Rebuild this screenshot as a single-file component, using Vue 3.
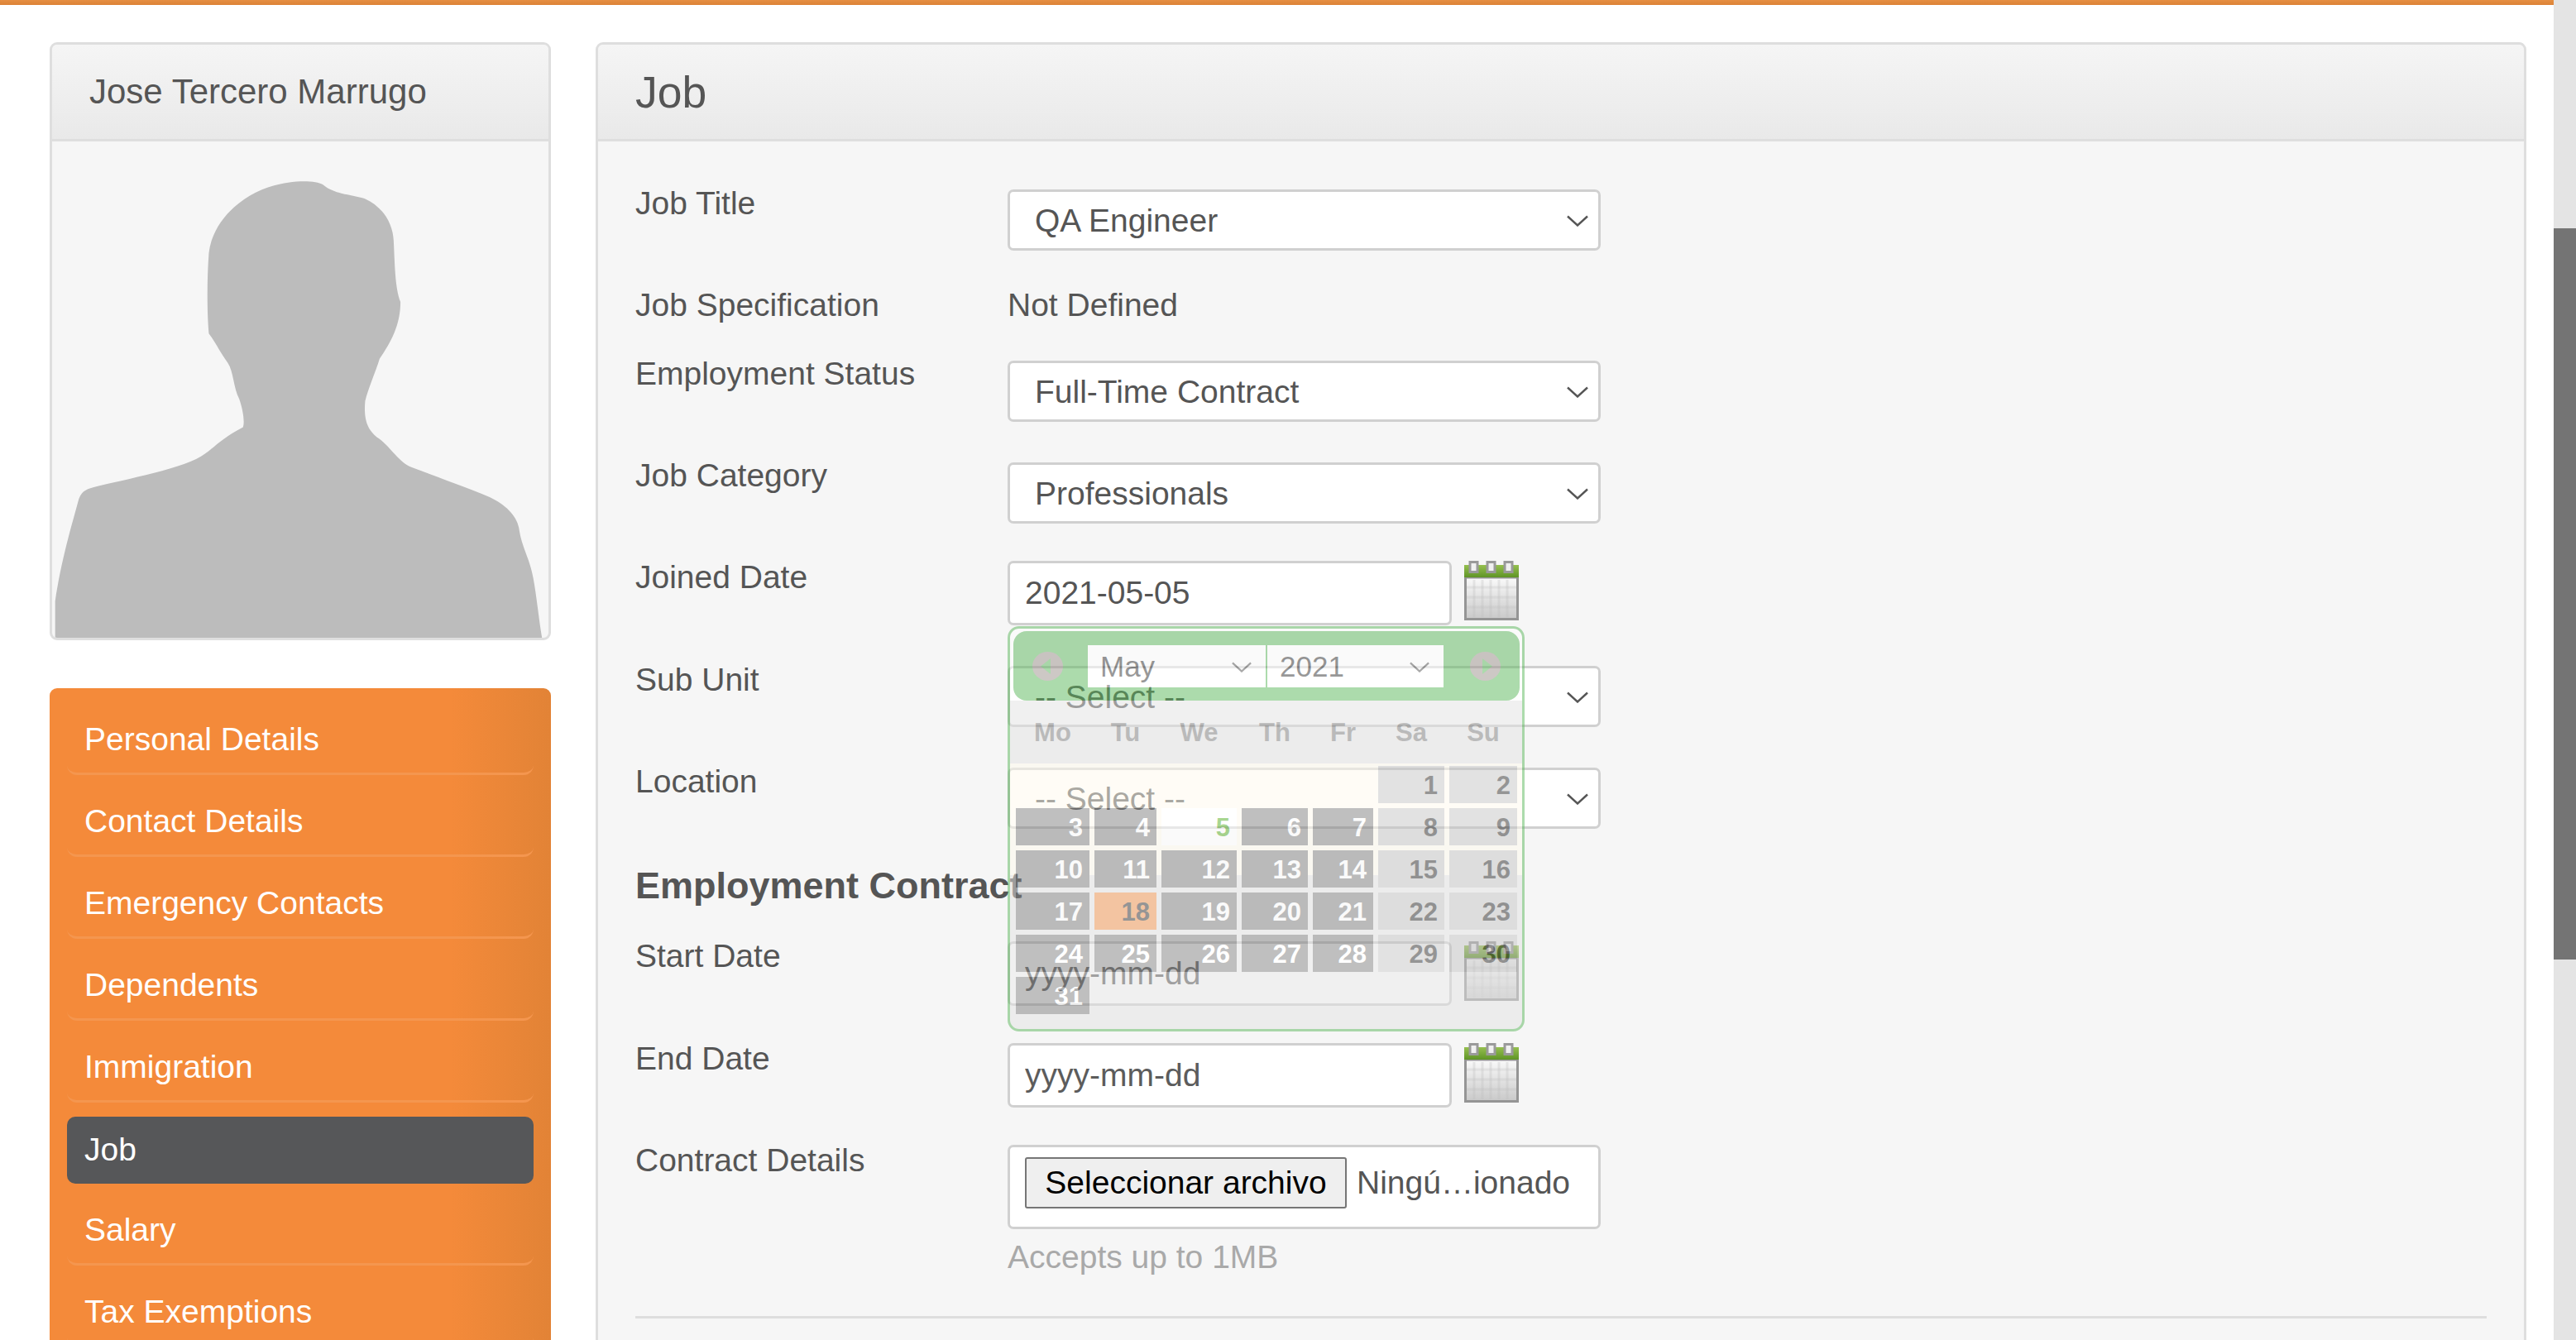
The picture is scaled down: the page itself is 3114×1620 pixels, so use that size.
<script setup>
const menu = ['Personal Details','Contact Details','Emergency Contacts','Dependents','Immigration','Job','Salary','Tax Exemptions']
const weekdays = ['Mo','Tu','We','Th','Fr','Sa','Su']
const days = []
const lead = 5
for (let i = 0; i < lead; i++) days.push({ n: '', kind: 'blank' })
for (let d = 1; d <= 31; d++) {
  const col = (d + lead - 1) % 7
  let kind = col >= 5 ? 'weekend' : 'weekday'
  if (d === 5) kind = 'selected'
  if (d === 18) kind = 'today'
  days.push({ n: d, kind })
}
const vlines = [12, 22, 32, 42, 52]
const hlines = [32, 44, 56]
</script>

<template>
  <div class="screen">
    <div class="page">
      <div class="topbar"></div>
      <div class="columns">
        <aside class="side">
          <section class="card">
            <header class="card-head name">Jose Tercero Marrugo</header>
            <div class="photo">
              <svg class="silhouette" viewBox="137 335 1308 1176" preserveAspectRatio="none">
                <path fill="#bcbcbc" d="M145 1511 L145 1425 C160 1330 190 1240 205 1190 C212 1165 225 1160 245 1155 C330 1135 490 1110 540 1075 C570 1055 590 1035 640 1012 C645 1000 640 970 630 945 C615 920 615 880 600 860 C580 835 570 815 550 790 C545 740 545 660 550 600 C560 520 640 460 720 440 C760 428 830 425 850 437 C880 460 920 460 960 470 C1010 490 1035 530 1037 570 C1040 620 1040 680 1055 715 C1055 770 1030 810 1000 850 C990 880 970 920 962 950 C958 990 965 1020 1000 1040 C1030 1060 1050 1095 1085 1107 C1150 1130 1230 1155 1290 1178 C1330 1195 1360 1220 1367 1250 C1375 1300 1395 1320 1405 1370 C1415 1420 1420 1470 1428 1511 Z"/>
              </svg>
            </div>
          </section>
          <nav class="menu">
            <a v-for="m in menu" :key="m" class="item" :class="{ active: m === 'Job' }">{{ m }}</a>
          </nav>
        </aside>

        <main class="card main-card">
          <header class="card-head title">Job</header>
          <div class="form-wrap">
            <form class="form">
              <label class="lbl">Job Title</label>
              <div class="ctl"><span class="sel"><select><option>QA Engineer</option></select><svg class="chev" viewBox="0 0 26 14"><path d="M1 1.5 L13 12.5 L25 1.5" /></svg></span></div>

              <label class="lbl lbl-plain">Job Specification</label>
              <div class="ctl plain">Not Defined</div>

              <label class="lbl lbl-tight">Employment Status</label>
              <div class="ctl"><span class="sel"><select><option>Full-Time Contract</option></select><svg class="chev" viewBox="0 0 26 14"><path d="M1 1.5 L13 12.5 L25 1.5" /></svg></span></div>

              <label class="lbl lbl-tight">Job Category</label>
              <div class="ctl"><span class="sel"><select><option>Professionals</option></select><svg class="chev" viewBox="0 0 26 14"><path d="M1 1.5 L13 12.5 L25 1.5" /></svg></span></div>

              <label class="lbl lbl-joined">Joined Date</label>
              <div class="ctl date">
                <input class="inp" value="2021-05-05" readonly />
                <svg class="cal-ico" viewBox="0 0 66 72">
                  <defs>
                    <linearGradient id="calbody" x1="0" y1="0" x2="0" y2="1"><stop offset="0" stop-color="#fafafa"/><stop offset="1" stop-color="#c9c9c9"/></linearGradient>
                    <linearGradient id="calgreen" x1="0" y1="0" x2="0" y2="1"><stop offset="0" stop-color="#96c050"/><stop offset="1" stop-color="#5f9426"/></linearGradient>
                  </defs>
                  <rect x="1.5" y="20" width="63" height="50.5" fill="url(#calbody)" stroke="#959595" stroke-width="3"/>
                  <path v-for="l in vlines" :key="l" :d="`M${l} 23 V68`" stroke="#bdbdbd" stroke-opacity=".3" stroke-width="3"/>
                  <path v-for="l in hlines" :key="l" :d="`M3 ${l} H63`" stroke="#bdbdbd" stroke-opacity=".25" stroke-width="3"/>
                  <rect x="0" y="5" width="66" height="15" fill="url(#calgreen)"/>
                  <rect v-for="c in [7, 28, 49]" :key="c" :x="c" y="1.5" width="9" height="12" fill="#f0f0f0" stroke="#9a9a9a" stroke-width="3"/>
                </svg>

                <div class="calendar">
                  <div class="cal-band"></div>
                  <div class="cal-head">
                    <span class="nav-btn"><svg viewBox="0 0 37 35"><path d="M22 8 L10 17.5 L22 27 Z" fill="#5cb85c"/></svg></span>
                    <span class="cal-sel month"><select><option>May</option></select><svg class="chev small" viewBox="0 0 26 14"><path d="M1 1.5 L13 12.5 L25 1.5" /></svg></span>
                    <span class="cal-sel year"><select><option>2021</option></select><svg class="chev small" viewBox="0 0 26 14"><path d="M1 1.5 L13 12.5 L25 1.5" /></svg></span>
                    <span class="nav-btn next"><svg viewBox="0 0 37 35"><path d="M15 8 L27 17.5 L15 27 Z" fill="#5cb85c"/></svg></span>
                  </div>
                  <div class="grid weekdays">
                    <span v-for="w in weekdays" :key="w">{{ w }}</span>
                  </div>
                  <div class="grid days">
                    <span v-for="(d, i) in days" :key="i" class="day" :class="d.kind">{{ d.n }}</span>
                  </div>
                </div>
              </div>

              <label class="lbl">Sub Unit</label>
              <div class="ctl"><span class="sel"><select><option>-- Select --</option></select><svg class="chev" viewBox="0 0 26 14"><path d="M1 1.5 L13 12.5 L25 1.5" /></svg></span></div>

              <label class="lbl">Location</label>
              <div class="ctl"><span class="sel"><select><option>-- Select --</option></select><svg class="chev" viewBox="0 0 26 14"><path d="M1 1.5 L13 12.5 L25 1.5" /></svg></span></div>

              <h2 class="section">Employment Contract</h2>

              <label class="lbl lbl-start">Start Date</label>
              <div class="ctl date">
                <input class="inp" placeholder="yyyy-mm-dd" />
                <svg class="cal-ico" viewBox="0 0 66 72">
                  <rect x="1.5" y="20" width="63" height="50.5" fill="url(#calbody)" stroke="#959595" stroke-width="3"/>
                  <path v-for="l in vlines" :key="l" :d="`M${l} 23 V68`" stroke="#bdbdbd" stroke-opacity=".3" stroke-width="3"/>
                  <path v-for="l in hlines" :key="l" :d="`M3 ${l} H63`" stroke="#bdbdbd" stroke-opacity=".25" stroke-width="3"/>
                  <rect x="0" y="5" width="66" height="15" fill="url(#calgreen)"/>
                  <rect v-for="c in [7, 28, 49]" :key="c" :x="c" y="1.5" width="9" height="12" fill="#f0f0f0" stroke="#9a9a9a" stroke-width="3"/>
                </svg>
              </div>

              <label class="lbl lbl-end">End Date</label>
              <div class="ctl date">
                <input class="inp" placeholder="yyyy-mm-dd" />
                <svg class="cal-ico" viewBox="0 0 66 72">
                  <rect x="1.5" y="20" width="63" height="50.5" fill="url(#calbody)" stroke="#959595" stroke-width="3"/>
                  <path v-for="l in vlines" :key="l" :d="`M${l} 23 V68`" stroke="#bdbdbd" stroke-opacity=".3" stroke-width="3"/>
                  <path v-for="l in hlines" :key="l" :d="`M3 ${l} H63`" stroke="#bdbdbd" stroke-opacity=".25" stroke-width="3"/>
                  <rect x="0" y="5" width="66" height="15" fill="url(#calgreen)"/>
                  <rect v-for="c in [7, 28, 49]" :key="c" :x="c" y="1.5" width="9" height="12" fill="#f0f0f0" stroke="#9a9a9a" stroke-width="3"/>
                </svg>
              </div>

              <label class="lbl lbl-details">Contract Details</label>
              <div class="ctl">
                <div class="file">
                  <button type="button" class="file-btn">Seleccionar archivo</button>
                  <span class="file-name">Ningú…ionado</span>
                </div>
                <div class="hint">Accepts up to 1MB</div>
              </div>
            </form>
            <hr class="divider" />
          </div>
        </main>
      </div>
    </div>
    <div class="scrollbar"><div class="thumb"></div></div>
  </div>
</template>

<style>
html, body { margin: 0; overflow: hidden; background: #fff; }
</style>

<style scoped>
.screen {
  display: flex;
  width: 3114px;
  height: 1620px;
  overflow: hidden;
  font-family: "Liberation Sans", Arial, sans-serif;
  color: #555;
}
.page { flex: 1; min-width: 0; background: #fff; }
.topbar { height: 6px; background: linear-gradient(#e58f43, #dc8236); }
.columns { display: flex; align-items: flex-start; padding: 45px 33px 0 60px; gap: 54px; }
.scrollbar { width: 27px; background: #e4e4e4; }
.thumb { margin-top: 276px; height: 884px; background: #747474; }

.side { width: 606px; flex: none; }
.card {
  border: 3px solid #dedede;
  border-radius: 9px;
  background: #f6f6f6;
  overflow: hidden;
}
.card-head {
  height: 114px;
  border-bottom: 3px solid #dedede;
  background: linear-gradient(#f5f5f5, #e9e9e9);
  box-sizing: content-box;
  display: flex;
  align-items: center;
}
.name { font-size: 42px; padding-left: 45px; }
.title { font-size: 53.5px; padding-left: 45px; }
.photo { height: 600px; display: flex; }
.silhouette { width: 600px; height: 600px; display: block; }

.menu {
  margin-top: 58px;
  padding: 23px 21px 0;
  height: 800px;
  border-radius: 9px 9px 0 0;
  background: linear-gradient(90deg, #f48a3a 0 80%, #e28336 100%);
  display: flex;
  flex-direction: column;
  gap: 17px;
}
.item {
  display: flex;
  align-items: center;
  flex: none;
  box-sizing: border-box;
  height: 82px;
  padding: 0 21px 2px;
  font-size: 39px;
  color: #fff;
  border-bottom: 3px solid #f4964f;
  border-radius: 0 0 12px 12px;
}
.item.active {
  height: 81px;
  background: #565759;
  border-bottom: 0;
  border-radius: 10px;
}

.main-card { flex: 1; min-width: 0; height: 1700px; }
.form-wrap { padding: 58px 45px 0; }
.form {
  display: grid;
  grid-template-columns: 450px 1fr;
  grid-template-rows: 116px 91px 123px 119px 127px 123px 114px 96px 123px 123px 207px;
  font-size: 39px;
}
.lbl { line-height: 34px; }
.lbl-plain { line-height: 48px; }
.lbl-tight { line-height: 32px; }
.lbl-joined { line-height: 40px; }
.lbl-start { line-height: 36px; }
.lbl-end { line-height: 38px; }
.lbl-details { line-height: 38px; }
.ctl { position: relative; min-width: 0; }
.plain { line-height: 48px; }
.sel {
  position: relative;
  display: block;
  width: 717px;
  height: 74px;
}
.sel select {
  appearance: none;
  width: 100%;
  height: 100%;
  box-sizing: border-box;
  padding: 0 60px 0 30px;
  border: 3px solid #d0d0d0;
  border-radius: 7px;
  background: #fff;
  font: inherit;
  color: #555;
  outline: none;
}
.chev {
  position: absolute;
  top: 31px;
  right: 15px;
  width: 26px;
  height: 14px;
  pointer-events: none;
}
.chev path { fill: none; stroke: #555; stroke-width: 2.4; }
.date { display: flex; align-items: flex-start; gap: 15px; }
.inp {
  width: 537px;
  height: 78px;
  box-sizing: border-box;
  padding: 0 18px;
  border: 3px solid #d0d0d0;
  border-radius: 7px;
  background: #fff;
  font: inherit;
  color: #555;
  outline: none;
}
.inp::placeholder { color: #5c5c5c; opacity: 1; }
.cal-ico { width: 66px; height: 72px; flex: none; }
.section {
  grid-column: 1 / -1;
  margin: 0;
  font-size: 45px;
  font-weight: 700;
  line-height: 58px;
}
.file {
  display: flex;
  align-items: center;
  width: 717px;
  height: 102px;
  box-sizing: border-box;
  padding: 0 18px 10px;
  border: 3px solid #d0d0d0;
  border-radius: 7px;
  background: #fff;
}
.file-btn {
  width: 389px;
  height: 62px;
  padding: 0;
  border: 2px solid #767676;
  border-radius: 3px;
  background: #efefef;
  color: #000;
  font: inherit;
}
.file-name { margin-left: 12px; }
.hint { margin-top: 12px; line-height: 44px; color: #a9a9a9; }
.divider { margin: 0; border: 0; border-top: 3px solid #dedede; }

.calendar {
  position: absolute;
  left: 0;
  top: 79px;
  z-index: 5;
  width: 625px;
  height: 490px;
  box-sizing: border-box;
  padding: 3px 3px 0 4px;
  border: 3px solid #5cb85c;
  border-radius: 14px;
  background: linear-gradient(#fff 0 87px, #e3e3e3 87px);
  opacity: 0.5;
}
.cal-band {
  position: absolute;
  left: 0;
  right: 0;
  top: 163px;
  height: 135px;
  background: #fffbee;
}
.cal-head {
  position: relative;
  display: flex;
  align-items: center;
  height: 84px;
  padding-left: 23px;
  border-radius: 16px;
  background: #5cb85c;
}
.nav-btn {
  width: 37px;
  height: 35px;
  border-radius: 50%;
  background: #9c928c;
  flex: none;
}
.nav-btn svg { display: block; width: 100%; height: 100%; }
.nav-btn.next { margin-left: 32px; }
.cal-sel { position: relative; display: block; height: 51px; flex: none; }
.month { width: 215px; margin-left: 30px; }
.year { width: 213px; margin-left: 2px; }
.cal-sel select {
  appearance: none;
  width: 100%;
  height: 100%;
  box-sizing: border-box;
  padding: 0 0 0 15px;
  border: 0;
  background: #fff;
  font: 35px "Liberation Sans", Arial, sans-serif;
  color: #333;
  outline: none;
}
.chev.small { top: 20px; right: 17px; width: 24px; height: 13px; }
.grid {
  position: relative;
  display: grid;
  grid-template-columns: 89px 75px 91px 80px 73px 80px 82px;
  column-gap: 6px;
  margin-left: 3px;
  font-weight: 700;
}
.weekdays {
  box-sizing: border-box;
  height: 75px;
  padding-top: 3px;
  align-items: center;
  text-align: center;
  font-size: 31px;
  color: #808080;
}
.days { margin-top: 4px; row-gap: 6px; grid-auto-rows: 45px; font-size: 31px; }
.day { padding-right: 8px; text-align: right; line-height: 47px; }
.day.blank { background: transparent; }
.day.weekday { background: #808080; color: #fff; }
.day.weekend { background: #c6c6c6; color: #2e2e2e; }
.day.selected { background: #fff; color: #54ae24; }
.day.today { background: #f2944e; color: #363636; }
</style>
